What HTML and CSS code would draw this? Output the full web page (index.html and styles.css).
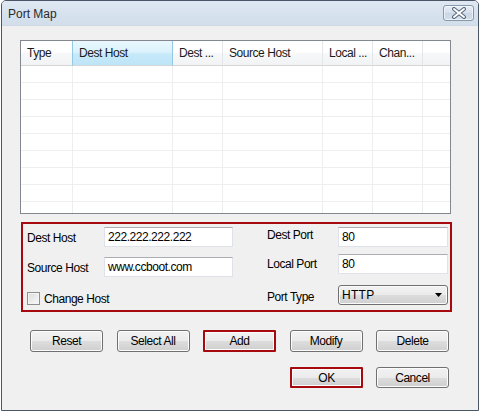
FILE: index.html
```html
<!DOCTYPE html>
<html>
<head>
<meta charset="utf-8">
<title>Port Map</title>
<link rel="stylesheet" href="styles.css">
</head>
<body>
<div class="window">
  <div class="titlebar">
    <span class="title">Port Map</span>
    <div class="close-btn">
      <svg width="16" height="12" viewBox="0 0 16 12">
        <path d="M3 2 L13 10 M13 2 L3 10" stroke="#58677a" stroke-width="4" stroke-linecap="round"/>
        <path d="M3 2 L13 10 M13 2 L3 10" stroke="#ffffff" stroke-width="2" stroke-linecap="round"/>
      </svg>
    </div>
  </div>
  <div class="content">
    <div class="list">
      <div class="grid">
        <div class="hcell">Type</div>
        <div class="hcell hot">Dest Host</div>
        <div class="hcell">Dest ...</div>
        <div class="hcell">Source Host</div>
        <div class="hcell">Local ...</div>
        <div class="hcell">Chan...</div>
        <div class="hcell last"></div>

        <div class="cell"></div><div class="cell"></div><div class="cell"></div><div class="cell"></div><div class="cell"></div><div class="cell"></div><div class="cell last"></div>
        <div class="cell"></div><div class="cell"></div><div class="cell"></div><div class="cell"></div><div class="cell"></div><div class="cell"></div><div class="cell last"></div>
        <div class="cell"></div><div class="cell"></div><div class="cell"></div><div class="cell"></div><div class="cell"></div><div class="cell"></div><div class="cell last"></div>
        <div class="cell"></div><div class="cell"></div><div class="cell"></div><div class="cell"></div><div class="cell"></div><div class="cell"></div><div class="cell last"></div>
        <div class="cell"></div><div class="cell"></div><div class="cell"></div><div class="cell"></div><div class="cell"></div><div class="cell"></div><div class="cell last"></div>
        <div class="cell"></div><div class="cell"></div><div class="cell"></div><div class="cell"></div><div class="cell"></div><div class="cell"></div><div class="cell last"></div>
        <div class="cell"></div><div class="cell"></div><div class="cell"></div><div class="cell"></div><div class="cell"></div><div class="cell"></div><div class="cell last"></div>
        <div class="cell"></div><div class="cell"></div><div class="cell"></div><div class="cell"></div><div class="cell"></div><div class="cell"></div><div class="cell last"></div>
        <div class="cell"></div><div class="cell"></div><div class="cell"></div><div class="cell"></div><div class="cell"></div><div class="cell"></div><div class="cell last"></div>
      </div>
    </div>

    <div class="form">
      <div class="col-left">
        <div class="row r1">
          <span class="label label-left">Dest Host</span>
          <div class="input input-left">222.222.222.222</div>
        </div>
        <div class="row r2">
          <span class="label label-left">Source Host</span>
          <div class="input input-left">www.ccboot.com</div>
        </div>
        <div class="row r3">
          <span class="checkbox"></span>
          <span class="label">Change Host</span>
        </div>
      </div>
      <div class="col-right">
        <div class="row r1">
          <span class="label label-right up">Dest Port</span>
          <div class="input input-right">80</div>
        </div>
        <div class="row rr2">
          <span class="label label-right">Local Port</span>
          <div class="input input-right">80</div>
        </div>
        <div class="row rr3">
          <span class="label label-right down">Port Type</span>
          <div class="select">
            <span>HTTP</span>
            <svg class="arrow" width="7" height="4" viewBox="0 0 7 4"><path d="M0 0 H7 L3.5 4 Z" fill="#000"/></svg>
          </div>
        </div>
      </div>
    </div>

    <div class="buttons">
      <div class="btn">Reset</div>
      <div class="btn">Select All</div>
      <div class="btn marked">Add</div>
      <div class="btn">Modify</div>
      <div class="btn">Delete</div>
    </div>
    <div class="buttons2">
      <div class="btn marked">OK</div>
      <div class="btn">Cancel</div>
    </div>
  </div>
</div>
</body>
</html>
```

FILE: styles.css
```css
html, body {
  margin: 0;
  padding: 0;
  background: #ffffff;
}
body {
  font-family: "Liberation Sans", Arial, sans-serif;
  font-size: 12px;
  letter-spacing: -0.45px;
  color: #000;
}
.window {
  box-sizing: border-box;
  width: 478px;
  height: 411px;
  margin-left: 1px;
  border: 1px solid #4a5566;
  border-radius: 5px 5px 0 0;
  overflow: hidden;
  display: flex;
  flex-direction: column;
  background: #f0f0f0;
}
.titlebar {
  height: 25px;
  flex: none;
  display: flex;
  justify-content: space-between;
  align-items: flex-start;
  padding: 4px 4px 0 6px;
  box-sizing: border-box;
  background: linear-gradient(#dfe8f2, #d6e1ee 60%, #d3deeb);
  border-bottom: 1px solid #cfd9e6;
}
.title {
  font-size: 12px;
  letter-spacing: 0;
  color: #2a2a2a;
  line-height: 16px;
  margin-top: 1px;
}
.close-btn {
  box-sizing: border-box;
  width: 31px;
  height: 16px;
  border: 1px solid #8797ac;
  border-radius: 3px;
  background: linear-gradient(#e7eef7, #d5dfec 50%, #cbd7e6 51%, #d3deeb);
  box-shadow: inset 0 0 0 1px rgba(255,255,255,0.6);
  display: flex;
  align-items: center;
  justify-content: center;
}
.content {
  flex: 1;
  background: #f0f0f0;
  padding: 14px 0 0 18px;
}
.list {
  box-sizing: border-box;
  width: 431px;
  height: 174px;
  border: 1px solid #828790;
  background: #ffffff;
  overflow: hidden;
}
.grid {
  display: grid;
  grid-template-columns: 52px 100px 50px 100px 50px 50px 1fr;
}
.hcell {
  box-sizing: border-box;
  height: 25px;
  line-height: 24px;
  padding-left: 6px;
  white-space: nowrap;
  overflow: hidden;
  color: #1a1a1a;
  border-right: 1px solid #e3e5e8;
  border-bottom: 1px solid #d5d5d5;
  background: linear-gradient(#ffffff, #ffffff 45%, #f6f7f8 55%, #f2f3f5);
}
.hcell.hot {
  background: linear-gradient(#e8f7fd, #dcf2fc 45%, #c7eafa 55%, #bde4f7);
  border-right: 1px solid #93c9e3;
  border-left: 1px solid #93c9e3;
  margin-left: -1px;
  padding-left: 6px;
}
.hcell.last {
  border-right: none;
}
.cell {
  box-sizing: border-box;
  height: 17px;
  border-right: 1px solid #eeeeee;
  border-bottom: 1px solid #eeeeee;
}
.cell.last {
  border-right: none;
}
.form {
  box-sizing: border-box;
  width: 431px;
  height: 90px;
  margin: 8px 0 0 1px;
  border: 2px solid #a6090e;
  display: flex;
  padding: 3px 0 0 4px;
}
.col-left {
  width: 240px;
  flex: none;
  display: flex;
  flex-direction: column;
}
.col-right {
  flex: 1;
  display: flex;
  flex-direction: column;
}
.row {
  display: flex;
  align-items: center;
  height: 20px;
}
.r2 { margin-top: 10px; }
.r3 { margin-top: 10px; height: 24px; }
.rr2 { margin-top: 7px; }
.rr3 { margin-top: 11px; }
.label {
  white-space: nowrap;
}
.label-left {
  width: 77px;
  flex: none;
  position: relative;
  top: 1px;
}
.label-right {
  width: 71px;
  flex: none;
}
.up { position: relative; top: -2px; }
.down { position: relative; top: 2px; }
.input {
  box-sizing: border-box;
  height: 20px;
  background: #ffffff;
  border: 1px solid #dfe2e8;
  border-top-color: #abadb3;
  padding: 0 3px;
  line-height: 18px;
  white-space: nowrap;
}
.input-left { width: 129px; }
.input-right { width: 110px; }
.checkbox {
  box-sizing: border-box;
  width: 13px;
  height: 13px;
  border: 1px solid #8e8f8f;
  background: linear-gradient(135deg, #dcdcdc, #fafafa);
  box-shadow: inset 0 0 0 1px #f4f4f4;
  margin-right: 4px;
  flex: none;
}
.select {
  box-sizing: border-box;
  width: 110px;
  height: 20px;
  border: 1px solid #707070;
  border-radius: 3px;
  background: linear-gradient(#f2f2f2, #ebebeb 50%, #dddddd 51%, #cfcfcf);
  box-shadow: inset 0 0 0 1px #fbfbfb;
  display: flex;
  align-items: center;
  justify-content: space-between;
  padding: 0 4px 0 3px;
  font-size: 12px;
  letter-spacing: 0.3px;
}
.arrow {
  display: block;
  margin-right: 1px;
}
.buttons {
  width: 419px;
  margin: 18px 0 0 10px;
  display: flex;
  justify-content: space-between;
}
.buttons2 {
  width: 419px;
  margin: 15px 0 0 10px;
  display: flex;
  justify-content: flex-end;
  gap: 13px;
}
.btn {
  box-sizing: border-box;
  width: 73px;
  height: 22px;
  border: 1px solid #707070;
  border-radius: 3px;
  background: linear-gradient(#f2f2f2, #ebebeb 50%, #dddddd 51%, #cfcfcf);
  box-shadow: inset 0 0 0 1px #fcfcfc;
  display: flex;
  align-items: center;
  justify-content: center;
  line-height: 1;
}
.buttons2 .btn {
  height: 21px;
}
.btn.marked {
  border: 2px solid #a6090e;
  border-radius: 1px;
}
```
